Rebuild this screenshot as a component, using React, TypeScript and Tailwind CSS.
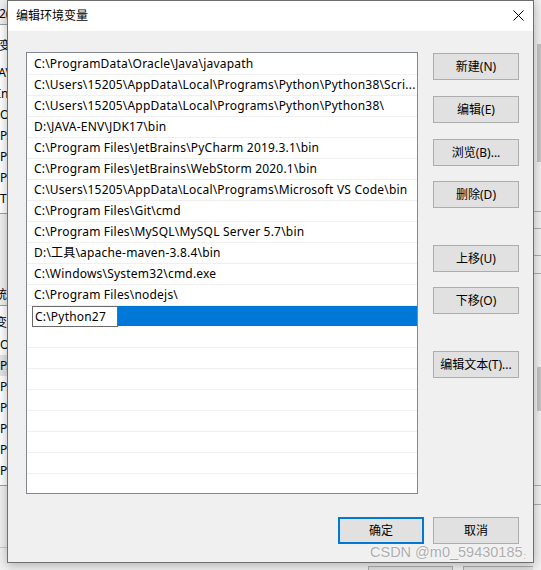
import React from "react";

const paths: string[] = [
  "C:\\ProgramData\\Oracle\\Java\\javapath",
  "C:\\Users\\15205\\AppData\\Local\\Programs\\Python\\Python38\\Scri...",
  "C:\\Users\\15205\\AppData\\Local\\Programs\\Python\\Python38\\",
  "D:\\JAVA-ENV\\JDK17\\bin",
  "C:\\Program Files\\JetBrains\\PyCharm 2019.3.1\\bin",
  "C:\\Program Files\\JetBrains\\WebStorm 2020.1\\bin",
  "C:\\Users\\15205\\AppData\\Local\\Programs\\Microsoft VS Code\\bin",
  "C:\\Program Files\\Git\\cmd",
  "C:\\Program Files\\MySQL\\MySQL Server 5.7\\bin",
  "D:\\工具\\apache-maven-3.8.4\\bin",
  "C:\\Windows\\System32\\cmd.exe",
  "C:\\Program Files\\nodejs\\",
];

function Btn({ label, primary }: { label: string; primary?: boolean }) {
  return (
    <div
      className={
        primary
          ? "w-[86px] h-[27px] flex items-center justify-center bg-[#e1e1e1] border-2 border-[#0078d7] text-[12px] text-black"
          : "w-[86px] h-[27px] flex items-center justify-center bg-[#e1e1e1] border border-[#adadad] text-[12px] text-black"
      }
    >
      {label}
    </div>
  );
}

function LeftStrip() {
  const row = "h-[21px] flex items-center text-[12px] text-black whitespace-nowrap overflow-hidden";
  return (
    <div className="w-[7px] shrink-0 h-full flex flex-col overflow-hidden bg-[#f0f0f0]">
      <div className="h-[24px] flex items-end pb-[1px] text-[12px] text-black whitespace-nowrap overflow-hidden">
        <span className="ml-[-1px]">2(</span>
      </div>
      <div className="h-[1px] bg-[#a0a0a0]" />
      <div className="h-[188px] bg-white flex flex-col">
        <div className="h-[37px] flex items-center pt-[4px] text-[12px] whitespace-nowrap overflow-hidden">
          <span className="ml-[-1px]">变</span>
        </div>
        <div className={row}><span className="ml-[-5px]">JAV</span></div>
        <div className={row}><span className="ml-[-3px]">Int</span></div>
        <div className={row}><span>On</span></div>
        <div className={row}><span>PA</span></div>
        <div className={row}><span>Py</span></div>
        <div className={row}><span>Py</span></div>
        <div className={row}><span>TE</span></div>
      </div>
      <div className="h-[1px] bg-[#a0a0a0]" />
      <div className="h-[71px]" />
      <div className="h-[20px] flex items-center text-[12px] whitespace-nowrap overflow-hidden">
        <span className="ml-[-5px]">统</span>
      </div>
      <div className="h-[1px] bg-[#a0a0a0]" />
      <div className="h-[179px] bg-white flex flex-col">
        <div className="h-[28px] flex items-center pt-[6px] text-[12px] whitespace-nowrap overflow-hidden">
          <span className="ml-[-5px]">变</span>
        </div>
        <div className={row}><span>OS</span></div>
        <div className={row + " bg-[#e5e5e5]"}><span>PA</span></div>
        <div className={row}><span>PA</span></div>
        <div className={row}><span>PR</span></div>
        <div className={row}><span>PR</span></div>
        <div className={row}><span>PR</span></div>
        <div className={row}><span>PR</span></div>
      </div>
      <div className="h-[1px] bg-[#a0a0a0]" />
      <div className="h-[61px]" />
      <div className="h-[1px] bg-[#c8c8c8]" />
    </div>
  );
}

function RightStrip() {
  return (
    <div className="w-[8px] shrink-0 h-full flex flex-col bg-[#f0f0f0]">
      <div className="h-[44px]" />
      <div className="h-[118px] flex justify-end">
        <div className="w-[4px] bg-[#c2c2c2]" />
      </div>
      <div className="h-[49px]" />
      <div className="h-[1px] bg-[#adadad]" />
      <div className="h-[16px]" />
      <div className="h-[1px] bg-[#adadad]" />
      <div className="h-[26px]" />
      <div className="h-[1px] bg-[#adadad]" />
      <div className="h-[17px]" />
      <div className="h-[1px] bg-[#adadad]" />
      <div className="h-[93px]" />
      <div className="h-[44px] flex justify-end">
        <div className="w-[4px] bg-[#c2c2c2]" />
      </div>
      <div className="h-[74px]" />
      <div className="h-[1px] bg-[#adadad]" />
      <div className="h-[18px]" />
      <div className="h-[1px] bg-[#adadad]" />
    </div>
  );
}

export default function App() {
  return (
    <div className="relative w-[541px] h-[570px] overflow-hidden bg-[#f0f0f0] font-['Noto_Sans','Noto_Sans_CJK_SC',sans-serif]">
      {/* background window */}
      <div className="flex h-full">
        <LeftStrip />
        <div className="flex-1 min-w-0 overflow-hidden flex flex-col">
          <div className="flex-1" />
          <div className="flex h-[8px] pl-[361px] gap-[10px]">
            <div className="w-[85px] shrink-0 h-[8px] mt-[4px] bg-[#e1e1e1] border border-[#adadad]" />
            <div className="w-[85px] shrink-0 h-[8px] mt-[4px] bg-[#e1e1e1] border border-[#adadad]" />
          </div>
        </div>
        <RightStrip />
      </div>

      {/* dialog */}
      <div className="absolute left-[7px] top-0 w-[527px] h-[563px] border border-[#6f6f6f] bg-[#f0f0f0] shadow-[0_2px_10px_rgba(0,0,0,0.28)] flex flex-col">
        <div className="h-[30px] bg-white flex items-center justify-between pl-[8px] pr-[9px]">
          <span className="text-[12px] text-black leading-none mt-[-1px]">编辑环境变量</span>
          <svg width="11" height="11" viewBox="0 0 11 11" className="mt-[-1px]">
            <path d="M0.5 0.5 L10.5 10.5 M10.5 0.5 L0.5 10.5" stroke="#000" strokeWidth="1" fill="none" />
          </svg>
        </div>
        <div className="flex pt-[21px] pl-[18px]">
          <div className="w-[392px] h-[442px] border border-[#828790] bg-white flex flex-col pt-[1px] overflow-hidden">
            {paths.map((p, i) => (
              <div
                key={i}
                className="h-[21px] shrink-0 border-b border-[#f0f0f0] flex items-center pl-[7px] pr-[2px] text-[12px] tracking-[0.2px] text-black whitespace-nowrap overflow-hidden"
              >
                {p}
              </div>
            ))}
            <div className="h-[21px] shrink-0 flex pl-[5px]">
              <div className="w-[86px] h-[21px] border border-[#6a6a6a] bg-white flex items-center pl-[2px] text-[12px] tracking-[0.2px] text-black whitespace-nowrap">
                C:\Python27
              </div>
              <div className="flex-1 h-[20px] bg-[#0078d7]" />
            </div>
            {Array.from({ length: 8 }).map((_, i) => (
              <div key={i} className="h-[21px] shrink-0 border-b border-[#f0f0f0]" />
            ))}
          </div>
          <div className="ml-[15px] flex flex-col pt-[1px]">
            <Btn label="新建(N)" />
            <div className="h-[16px]" />
            <Btn label="编辑(E)" />
            <div className="h-[16px]" />
            <Btn label="浏览(B)..." />
            <div className="h-[15px]" />
            <Btn label="删除(D)" />
            <div className="h-[37px]" />
            <Btn label="上移(U)" />
            <div className="h-[15px]" />
            <Btn label="下移(O)" />
            <div className="h-[37px]" />
            <Btn label="编辑文本(T)..." />
          </div>
        </div>
        <div className="flex justify-end gap-[9px] pr-[14px] mt-[23px]">
          <Btn label="确定" primary />
          <Btn label="取消" />
        </div>
      </div>

      {/* watermark */}
      <div className="absolute left-[370px] top-[545px] flex items-end text-[14.5px] leading-none text-[#acacac] font-['Liberation_Sans',sans-serif] [text-shadow:0_0_1px_#ffffff,0_0_2px_#ffffff]">
        <span>CSDN @m0_59430185</span>
        <span className="text-[9px] ml-[1px] mb-[-1px]">:</span>
      </div>
    </div>
  );
}
